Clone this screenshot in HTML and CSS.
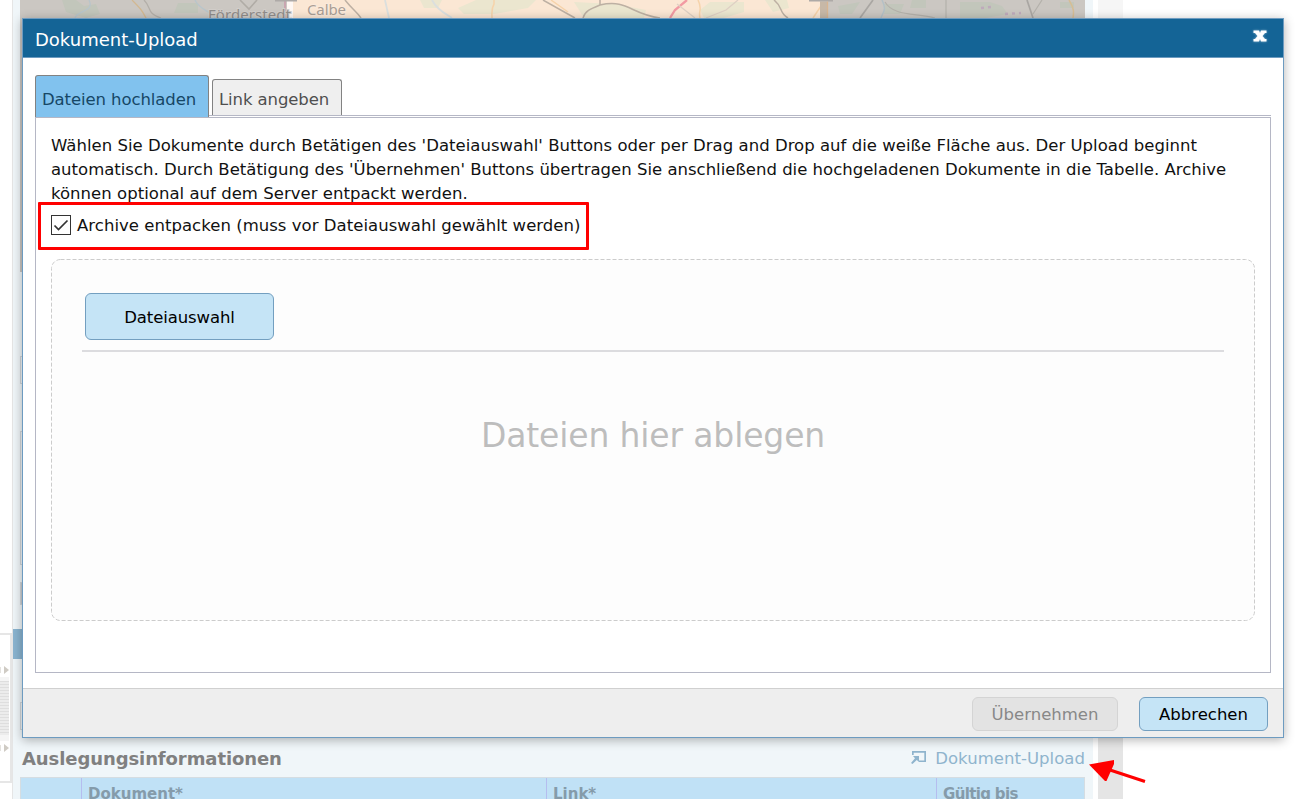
FILE: index.html
```html
<!DOCTYPE html>
<html lang="de">
<head>
<meta charset="utf-8">
<title>Dokument-Upload</title>
<link rel="stylesheet" href="styles.css">
</head>
<body>
<div class="page">
  <aside class="rail">
    <div class="rail-box">
      <svg class="rail-arrow" width="10" height="10" viewBox="0 0 10 10"><path d="M0 2h1v6H0z" fill="#e4e2de"/><path d="M4 1l5 4-5 4z" fill="#cfcbc4"/></svg>
      <div class="rail-lines"></div>
      <svg class="rail-arrow" width="10" height="10" viewBox="0 0 10 10"><path d="M0 2h1v6H0z" fill="#e4e2de"/><path d="M4 1l5 4-5 4z" fill="#cfcbc4"/></svg>
    </div>
  </aside>
  <main class="content">
    <div class="map">
      <svg width="1065" height="272" viewBox="20 0 1065 272">
        <rect x="20" width="1065" height="272" fill="#cbc7c2"/>
        <path d="M62 0h14l8 6 12-2 4 10-14 4-20-6zM178 3h20v10h-24zM838 6l22-4-8 12h-12zM884 4h20l-4 10h-16zM912 0h14v8h-16zM960 2h30l12 4 6 8-22 4h-26zM1060 2h14v6h-14z" fill="#c2c6bb"/>
        <path d="M75 18c2-8 20-6 14-18M195 0c4 10 18 12 20 18" fill="none" stroke="#b8c5cb" stroke-width="1.3"/>
        <path d="M144 0c8 8 2 13 17 18" fill="none" stroke="#b3afa9" stroke-width="1.3"/>
        <path d="M132 0c8 8 10 10 14 18" fill="none" stroke="#d2b891" stroke-width="1.3"/>
        <path d="M240 0l9 9 8-9" fill="none" stroke="#b0aca6" stroke-width="1.6"/>
        <rect x="287" width="533" height="18" fill="#fbe7d4"/>
        <path d="M287 0h6v18h-6z" fill="#fff8f4"/><path d="M284 0h2v18h-2z" fill="#c9a5b0"/>
        <path d="M420 0h22l-4 8h-14zM458 8l18-8h60l-8 8-34 6h-30zM574 2l40 2 32 6-2 8h-60zM700 10l10-8h34v10l-20 6h-20zM765 0h22l2 8-16 4z" fill="#ebe6cf"/>
        <path d="M345 0c8 10 12 12 16 18M543 0l32 18M600 0v5c-10 4-15 6-17 13M600 5c28-6 30 9 60 13M774 0c10 8 4 12 14 18" fill="none" stroke="#bdb0a3" stroke-width="1.5"/>
        <path d="M494 0v4c-3 5-2 9-2 14M551 0l17 12M698 0c5 10 0 10 2 18M813 18l8-12" fill="none" stroke="#f6d3aa" stroke-width="1.5"/>
        <path d="M687 0l-12 10-5 8" fill="none" stroke="#f29aa3" stroke-width="2.3"/>
        <path d="M432 0c5 10 14 14 20 18M385 0l4 18" fill="none" stroke="#dbdfde" stroke-width="1.8"/>
        <path d="M677 4l18 14M706 18l20-8 12-10" fill="none" stroke="#dfd0c4" stroke-width="1.3"/>
        <path d="M275 0h22v1.500h-22zM809 0h24v1.500h-24z" fill="#aeaaa7"/>
        <path d="M820 1.500h7v16.500h-7z" fill="#c7b8a7"/><path d="M827.500 1.500V18" stroke="#d8b591" stroke-width="1.3"/>
        <path d="M860 18l13-18" fill="none" stroke="#a9a6a2" stroke-width="1.7"/>
        <path d="M885 2c8 14 30 11 50 16M946 0v18M1033 14l9-14" fill="none" stroke="#b4b1ab" stroke-width="1.2"/>
        <path d="M1027 0l6 18" fill="none" stroke="#a9a6a2" stroke-width="1.7"/>
        <path d="M882 0c5 10 1 12-1 18" fill="none" stroke="#b3c0c6" stroke-width="1.5"/>
        <path d="M1069 0c5 8 5 12 4 18" fill="none" stroke="#d6bd94" stroke-width="1.5"/>
        <path d="M981 8l10-1M1005 14l16-1" fill="none" stroke="#beaabb" stroke-width="2.5" stroke-dasharray="3 4"/>
        <text x="208" y="20" class="map-name" textLength="83">Förderstedt</text>
        <text x="307" y="15" class="map-name map-name-light" textLength="39">Calbe</text>
      </svg>
    </div>
    <div class="field field-a"></div>
    <div class="field field-b"></div>
    <div class="field field-c"></div>
    <div class="section-bar"></div>
    <div class="field field-d"></div>
    <div class="section-head">
      <h2 class="section-title">Auslegungsinformationen</h2>
      <a class="upload-link">
        <svg width="16" height="15" viewBox="0 0 16 15" fill="#8fb4cd"><path d="M1 1H15V12H8V10.500H13.300V2.700H2.700V5H1z"/><path d="M2 6H8V12L5.800 10L1.500 14L0 13L4 8.200z"/></svg>
        <span class="upload-text">Dokument-Upload</span>
      </a>
    </div>
    <div class="grid-head">
      <span class="cell"></span><span class="cell">Dokument*</span><span class="cell">Link*</span><span class="cell cell-date">Gültig bis</span>
    </div>
  </main>
  <div class="scroll"></div>
</div>

<section class="dialog">
  <header class="dialog-head">
    <h1 class="dialog-title">Dokument-Upload</h1>
    <svg class="close" width="18" height="16" viewBox="0 0 18 16"><path d="M2.500 2.500H8L9 5L10 2.500H15.500V5H14L11.500 8L14 11H15.500V13.500H10L9 11L8 13.500H2.500V11H4L6.500 8L4 5H2.500z" fill="#fff"/></svg>
  </header>
  <div class="dialog-body">
    <nav class="tabs">
      <span class="tab tab-active">Dateien hochladen</span>
      <span class="tab">Link angeben</span>
    </nav>
    <div class="panel">
      <p class="intro"><span class="line-a">Wählen Sie Dokumente durch Betätigen des 'Dateiauswahl' Buttons oder per Drag and Drop auf die weiße Fläche aus. Der Upload beginnt</span><br><span class="line-b">automatisch. Durch Betätigung des 'Übernehmen' Buttons übertragen Sie anschließend die hochgeladenen Dokumente in die Tabelle. Archive</span><br><span class="line-c">können optional auf dem Server entpackt werden.</span></p>
      <label class="option">
        <svg class="check" width="20" height="20" viewBox="0 0 20 20"><rect x=".5" y=".5" width="19" height="19" fill="#fff" stroke="#333"/><path d="M3.500 10.500L7.500 14.500L16.500 5.500" fill="none" stroke="#333" stroke-width="1.700"/></svg>
        <span class="option-text">Archive entpacken (muss vor Dateiauswahl gewählt werden)</span>
      </label>
      <div class="drop">
        <svg class="drop-outline" width="1204" height="362"><rect x=".5" y=".5" width="1203" height="361" rx="9" fill="#fdfdfd" stroke="#ccc" stroke-dasharray="4 2"/></svg>
        <div class="drop-inner">
          <button class="btn btn-file">Dateiauswahl</button>
          <div class="rule"></div>
          <div class="drop-hint">Dateien hier ablegen</div>
        </div>
      </div>
    </div>
  </div>
  <footer class="dialog-foot">
    <button class="btn btn-off">Übernehmen</button>
    <button class="btn btn-cancel">Abbrechen</button>
  </footer>
</section>

<div class="highlight"></div>
<svg class="pointer" width="60" height="26" viewBox="1088 758 60 26"><path d="M1110 770L1145 781.500" stroke="#f00" stroke-width="3"/><path d="M1089 764.500L1114 760V764L1106.500 781H1105z" fill="#f00"/></svg>
</body>
</html>
```
FILE: styles.css
```css
* { box-sizing: border-box; }
html, body { height: 100%; }
body { margin: 0; background: #fff; overflow: hidden; font-family: Verdana, "DejaVu Sans", sans-serif; font-size: 16.5px; }
h1, h2, p { margin: 0; }
svg { display: block; flex: none; }

.page { display: flex; height: 799px; }
.rail { width: 12px; padding-top: 633px; }
.rail-box { display: flex; flex-direction: column; height: 150px; padding-top: 30px; border: 2px solid #e6e6e6; border-left: 0; }
.rail-lines { height: 64px; margin: 2px 1px 2px 0; border: solid #f5f5f5; border-width: 4px 0 6px; background: repeating-linear-gradient(#dedede 0 1px, #ececec 1px 3px); }
.content { width: 1081px; padding-left: 7px; border-left: 1px solid #e5e5e5; background: #f0f6f9; }
.map { width: 1065px; height: 272px; overflow: hidden; }
.map-name { font: 15px "Noto Sans", sans-serif; fill: #918d8b; stroke: #d2ceca; stroke-width: 2px; paint-order: stroke; }
.map-name-light { fill: #aa9e95; stroke: #fbeadb; }
.field { width: 1065px; border: 1px solid #d2d7da; }
.field-a { height: 28px; margin-top: 84px; }
.field-b { height: 134px; margin-top: 47px; }
.field-c { height: 23px; margin-top: 17px; background: #c9cdd0; }
.section-bar { height: 30px; margin: 24px 0 0 -7px; background: #8ab4d0; }
.field-d { height: 28px; margin-top: 43px; }
.section-head { display: flex; justify-content: space-between; align-items: center; width: 1065px; height: 47px; padding: 11px 0 0 2px; }
.section-title { font-size: 18px; line-height: 24px; letter-spacing: -.09px; color: #808080; }
.upload-link { display: flex; align-items: center; gap: 8px; color: #8fb4cd; font-size: 16.5px; line-height: 24px; }
.upload-link svg { margin-top: -4px; }
.upload-text { letter-spacing: .04px; }
.grid-head { display: grid; grid-template-columns: 60px 465px 390px 148px; width: 1065px; height: 26px; border-top: 1px solid #d5dde2; border-left: 1px solid #d5dde2; border-right: 1px solid #d5dde2; background: #c0e1f6; }
.cell { padding: 6px 0 0 6px; font-size: 15px; font-weight: bold; line-height: 20px; color: #859baa; white-space: nowrap; }
.cell + .cell { border-left: 1px solid #b5bdef; }
.cell-date { letter-spacing: -.65px; }
.scroll { width: 25px; margin-left: 5px; background: linear-gradient(#f6f6f6 0 300px, #e5e5e5 300px); }

/* modal window */
.dialog { position: absolute; left: 22px; top: 18px; width: 1262px; height: 720px; display: flex; flex-direction: column; border: 1px solid #6d9bc0; background: #fff; box-shadow: 0 2px 10px rgba(0, 0, 0, .3); }
.dialog-head { display: flex; justify-content: space-between; height: 39px; padding: 0 14px 0 12px; border-bottom: 1px solid #6d9bc0; background: #146496; color: #fff; }
.dialog-title { font-size: 18px; font-weight: normal; line-height: 41px; white-space: nowrap; }
.close { margin-top: 9px; filter: drop-shadow(0 0 1px rgba(255, 255, 255, .5)); }
.dialog-body { flex: 1; padding: 17px 12px 0; }
.tabs { position: relative; z-index: 1; display: flex; align-items: flex-end; gap: 3px; height: 41px; border-bottom: 1px solid #b5b7c5; }
.tab { width: 130px; height: 36px; padding: 8px 0 0 6px; border: 1px solid #828282; border-bottom: 0; border-radius: 3px 3px 0 0; background: #efefef; color: #4f4f4f; font-size: 16.5px; letter-spacing: -.1px; line-height: 24px; white-space: nowrap; }
.tab-active { width: 174px; height: 42px; margin-bottom: -2px; padding-top: 12px; background: #81c2ee; color: #164766; }
.panel { height: 556px; margin-top: 1px; padding: 16px 15px 0; border: 1px solid #b5b7c5; }
.intro { line-height: 24px; white-space: nowrap; color: #111; }
.line-a { letter-spacing: .025px; }
.line-c { letter-spacing: .03px; }
.option { display: flex; align-items: center; gap: 6px; height: 24px; margin-top: 7px; color: #111; white-space: nowrap; }
.option-text { letter-spacing: .035px; }
.drop { position: relative; width: 1204px; height: 362px; margin-top: 22px; }
.drop-outline { position: absolute; inset: 0; }
.drop-inner { position: relative; padding: 34px 31px 0; }
.btn { display: block; padding: 0; border: 1px solid #739fc0; border-radius: 6px; background: #c5e4f6; color: #000; font-family: inherit; font-size: 16.5px; white-space: nowrap; }
.btn-file { width: 189px; height: 47px; margin-left: 3px; padding-top: 1px; letter-spacing: -.1px; }
.rule { height: 2px; margin-top: 10px; background: #dcdcdf; }
.drop-hint { margin-top: 60px; font-size: 33px; letter-spacing: -.14px; line-height: 48px; text-align: center; color: #bdbdbd; white-space: nowrap; }
.dialog-foot { display: flex; justify-content: flex-end; gap: 21px; height: 49px; padding: 8px 15px 0 0; border-top: 1px solid #d0d0d0; background: #eee; }
.btn-off { width: 146px; height: 34px; border-color: #d4d4d4; background: #e3e3e3; color: #888; }
.btn-cancel { width: 129px; height: 34px; }

/* annotations over the window */
.highlight { position: absolute; left: 38px; top: 202px; width: 551px; height: 48px; border: 3px solid #f00; border-radius: 1px; }
.pointer { position: absolute; left: 1088px; top: 758px; }
```
